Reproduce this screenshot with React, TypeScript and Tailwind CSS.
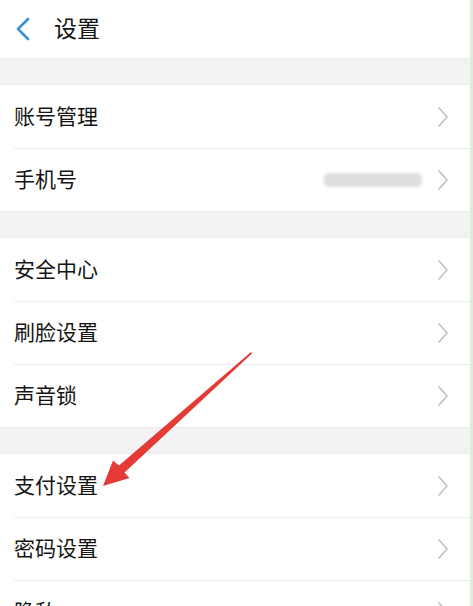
import React from "react";

const Chevron = () => (
  <svg width="14" height="22" viewBox="0 0 14 22" className="shrink-0">
    <path d="M3 2 L11 11 L3 20" fill="none" stroke="#c2c2c5" strokeWidth="1.7" strokeLinecap="round" strokeLinejoin="round" />
  </svg>
);

type Row = { label: string; value?: boolean };

const Group = ({ rows }: { rows: Row[] }) => (
  <div className="bg-white flex flex-col">
    {rows.map((r, i) => (
      <div key={r.label} className="flex flex-col">
        {i > 0 && <div className="ml-[14px] h-px bg-[#ececee]" />}
        <div className={(i > 0 ? "h-[62px]" : "h-[63px]") + " flex items-center pl-[14px] pr-[20px]"}>
          <span className="flex-1 text-[21px] text-[#151515] leading-none pb-[3px]">{r.label}</span>
          {r.value && (
            <div className="mr-[14px] w-[98px] h-[14px] rounded-[5px] bg-[#dedede] blur-[1.5px]" />
          )}
          <Chevron />
        </div>
      </div>
    ))}
  </div>
);

const Band = () => <div className="h-[27px] bg-[#f3f3f6] border-y border-[#ececef]" />;

export default function App() {
  return (
    <div
      className="relative w-[473px] h-[606px] overflow-hidden bg-white border-r-[3px] border-[#dcefdc]"
      style={{ fontFamily: '"Noto Sans CJK SC", "Noto Sans", sans-serif' }}
    >
      <div className="h-[58px] flex items-center pl-[15px]">
        <svg width="16" height="24" viewBox="0 0 16 24">
          <path d="M13 2 L3 12 L13 22" fill="none" stroke="#3b8fd2" strokeWidth="2.6" strokeLinecap="round" strokeLinejoin="round" />
        </svg>
        <span className="ml-[23px] text-[23px] text-[#151515] leading-none pb-[3px]">设置</span>
      </div>
      <Band />
      <Group rows={[{ label: "账号管理" }, { label: "手机号", value: true }]} />
      <Band />
      <Group rows={[{ label: "安全中心" }, { label: "刷脸设置" }, { label: "声音锁" }]} />
      <Band />
      <Group rows={[{ label: "支付设置" }, { label: "密码设置" }, { label: "隐私" }]} />

      <svg className="absolute inset-0 pointer-events-none" width="473" height="606" viewBox="0 0 473 606">
        <polygon
          points="251,352 252,353.5 124.5,472.5 129.5,478 103,486 113,460.5 119,465.5"
          fill="#e53b36"
        />
      </svg>
    </div>
  );
}
